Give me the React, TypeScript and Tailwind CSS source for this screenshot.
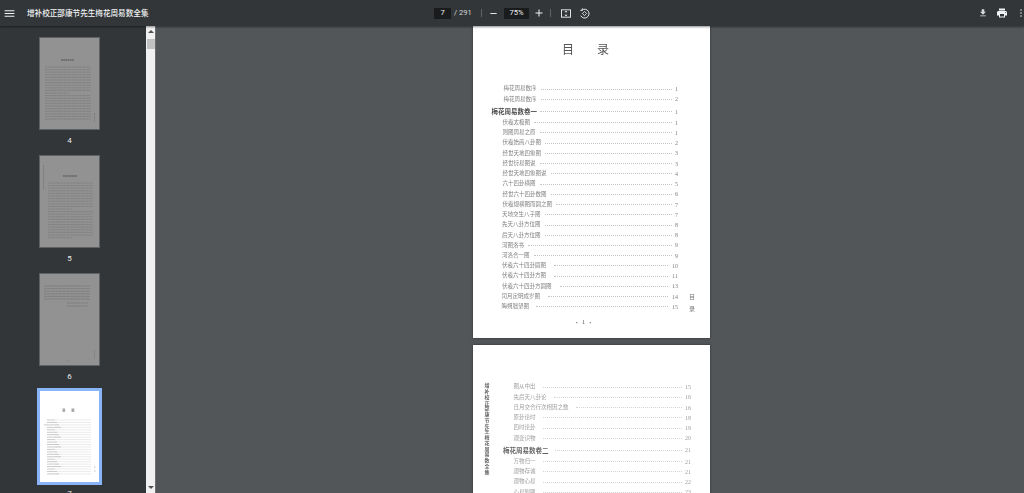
const cjk = "font-['Noto_Sans_CJK_SC','Noto_Sans',sans-serif]";

function Icon({ d, className }: { d: string; className: string }) {
  return (
    <svg viewBox="0 0 24 24" fill="currentColor" className={className}>
      <path d={d} />
    </svg>
  );
}

const MENU = "M3 18h18v-2H3v2zm0-5h18v-2H3v2zm0-7v2h18V6H3z";
const MINUS = "M19 13H5v-2h14v2z";
const PLUS = "M19 13h-6v6h-2v-6H5v-2h6V5h2v6h6v2z";
const DOWNLOAD = "M19 9h-4V3H9v6H5l7 7 7-7zM5 18v2h14v-2H5z";
const PRINT = "M19 8H5c-1.66 0-3 1.34-3 3v6h4v4h12v-4h4v-6c0-1.66-1.34-3-3-3zm-3 11H8v-5h8v5zm3-7c-.55 0-1-.45-1-1s.45-1 1-1 1 .45 1 1-.45 1-1 1zm-1-9H6v4h12V3z";
const MORE = "M12 8c1.1 0 2-.9 2-2s-.9-2-2-2-2 .9-2 2 .9 2 2 2zm0 2c-1.1 0-2 .9-2 2s.9 2 2 2 2-.9 2-2-.9-2-2-2zm0 6c-1.1 0-2 .9-2 2s.9 2 2 2 2-.9 2-2-.9-2-2-2z";

function Toolbar() {
  return (
    <div className="relative z-10 grid h-[26px] shrink-0 grid-cols-[1fr_auto_1fr] items-center bg-[#323639] text-[#f1f3f4] shadow-[0_1px_2px_rgba(0,0,0,0.45)]">
      <div className="flex items-center">
        <Icon d={MENU} className="ml-[3px] h-[13px] w-[13px]" />
        <span className={`ml-[11px] whitespace-nowrap text-[7.6px] font-medium ${cjk}`}>增补校正邵康节先生梅花周易数全集</span>
      </div>
      <div className="flex items-center font-['Roboto',sans-serif] text-[7.5px]">
        <div className="flex h-[11px] w-[17px] items-center justify-center bg-[#191b1c]">7</div>
        <span className="ml-[3px] w-[16px] whitespace-nowrap text-[#d5d7d8]">/ 291</span>
        <div className="ml-[11px] h-[8px] w-px bg-[#5f6368]" />
        <Icon d={MINUS} className="ml-[6px] h-[11px] w-[11px]" />
        <div className="ml-[5px] flex h-[11px] w-[25px] items-center justify-center bg-[#191b1c]">75%</div>
        <Icon d={PLUS} className="ml-[4px] h-[12px] w-[12px]" />
        <div className="ml-[5px] h-[8px] w-px bg-[#5f6368]" />
        <svg viewBox="0 0 12 10" fill="none" stroke="currentColor" className="ml-[10px] h-[9px] w-[10px]">
          <rect x="0.6" y="0.6" width="10.8" height="8.8" strokeWidth="1.1" />
          <path d="M6 2v2M6 6v2M4.8 3.4 6 2l1.2 1.4M4.8 6.6 6 8l1.2-1.4" strokeWidth="0.9" />
        </svg>
        <svg viewBox="0 0 12 12" fill="none" stroke="currentColor" className="ml-[8px] h-[11px] w-[11px]">
          <path d="M3.4 2.2A4.8 4.8 0 1 1 1.9 8.4" strokeWidth="1" />
          <path d="M3.6 0.4v2.2H1.4" strokeWidth="1" />
          <path d="M3.7 6 6 3.7 8.3 6 6 8.3z" strokeWidth="0.9" />
        </svg>
      </div>
      <div className="flex items-center justify-end">
        <Icon d={DOWNLOAD} className="mr-[1px] h-[10px] w-[10px] text-[#d8dadb]" />
        <Icon d={PRINT} className="ml-[7px] h-[12px] w-[12px]" />
        <Icon d={MORE} className="ml-[7px] mr-[-3px] h-[12px] w-[12px] text-[#8d8f91]" />
      </div>
    </div>
  );
}

function Lines({ x1, x2, top, rows, pitch, ink }: { x1: number; x2: number; top: number; rows: number; pitch: number; ink: string }) {
  return (
    <g stroke={ink} strokeWidth="0.8">
      {Array.from({ length: rows }, (_, i) => (
        <line key={i} x1={x1} x2={i % 11 === 10 ? x1 + 24 : x2} y1={top + i * pitch} y2={top + i * pitch} strokeDasharray="2 0.3 1.2 0.3" />
      ))}
    </g>
  );
}

function Thumb({ page, selected }: { page: number; selected?: boolean }) {
  return (
    <div className="flex h-[117.7px] shrink-0 flex-col items-center">
      <svg
        viewBox="0 0 59 91"
        className={
          selected
            ? "h-[91px] w-[59px] shrink-0 bg-white outline-[3.4px] outline-[#8ab4f8]"
            : "h-[91px] w-[59px] shrink-0 bg-[#929292] outline outline-1 outline-[#5f6264] blur-[0.3px]"
        }
      >
        {page === 4 && (
          <>
            <line x1="21" x2="34" y1="22" y2="22" stroke="#666" strokeWidth="1.3" strokeDasharray="1.8 0.4" />
            <Lines x1={5} x2={51} top={29} rows={21} pitch={2.6} ink="#7c7c7c" />
            <line x1="54.5" x2="54.5" y1="75" y2="84" stroke="#7a7a7a" strokeWidth="1" strokeDasharray="1 0.3" />
          </>
        )}
        {page === 5 && (
          <>
            <line x1="3.5" x2="3.5" y1="9" y2="33" stroke="#7a7a7a" strokeWidth="1" strokeDasharray="1 0.3" />
            <line x1="23" x2="37" y1="20" y2="20" stroke="#666" strokeWidth="1.3" strokeDasharray="1.8 0.4" />
            <Lines x1={8} x2={53} top={27} rows={22} pitch={2.6} ink="#7e7e7e" />
          </>
        )}
        {page === 6 && (
          <>
            <Lines x1={4} x2={50} top={12} rows={6} pitch={2.6} ink="#797979" />
            <line x1="27" x2="48" y1="29" y2="29" stroke="#797979" strokeWidth="0.8" strokeDasharray="2 0.3 1.2 0.3" />
            <line x1="27" x2="48" y1="32" y2="32" stroke="#797979" strokeWidth="0.8" strokeDasharray="2 0.3 1.2 0.3" />
            <line x1="54.5" x2="54.5" y1="76" y2="85" stroke="#808080" strokeWidth="1" strokeDasharray="1 0.3" />
            <line x1="26" x2="30" y1="87" y2="87" stroke="#848484" strokeWidth="0.6" />
          </>
        )}
        {page === 7 && (
          <>
            <rect x="22.5" y="17.5" width="2.6" height="3.4" fill="#a8a8a8" />
            <rect x="31.5" y="17.5" width="2.8" height="3.4" fill="#a8a8a8" />
            <g stroke="#e6e6e6" strokeWidth="0.8">
              {Array.from({ length: 23 }, (_, i) => (
                <line key={i} x1="15" x2="51" y1={29 + i * 2.45} y2={29 + i * 2.45} />
              ))}
            </g>
            <g stroke="#c4c4c4" strokeWidth="0.9">
              {Array.from({ length: 23 }, (_, i) => (
                <line key={i} x1={i === 2 ? 4 : 7} x2={15 + (i % 4) * 2} y1={29 + i * 2.45} y2={29 + i * 2.45} />
              ))}
            </g>
            <line x1="54" x2="55.5" y1="76" y2="76" stroke="#bbbbbb" strokeWidth="0.9" />
            <line x1="54" x2="55.5" y1="80" y2="80" stroke="#bbbbbb" strokeWidth="0.9" />
          </>
        )}
      </svg>
      <span className="mt-[7px] font-['Roboto',sans-serif] text-[8px] leading-[10px] text-[#e8eaed]">{page}</span>
    </div>
  );
}

function Sidebar() {
  return (
    <div className="flex w-[146px] shrink-0 flex-col items-center overflow-hidden bg-[#323639] pr-[7px] pt-[12.3px]">
      {[4, 5, 6, 7].map((p) => (
        <Thumb key={p} page={p} selected={p === 7} />
      ))}
    </div>
  );
}

function Scrollbar() {
  return (
    <div className="flex w-[10px] shrink-0 flex-col items-center justify-between border-r border-r-[#6a6d70] bg-[#f1f1f1] py-[4px]">
      <div className="relative flex w-full flex-col items-center">
        <div className="h-0 w-0 border-x-[3px] border-b-[3px] border-x-transparent border-b-[#505050]" />
        <div className="mt-[6px] h-[10px] w-[8px] bg-[#c1c1c1]" />
      </div>
      <div className="h-0 w-0 border-x-[3px] border-t-[3px] border-x-transparent border-t-[#505050]" />
    </div>
  );
}

type Entry = {
  text: string;
  num: string;
  indent: string; // left offset of the text
  gap: string; // space before the leader
  tail?: string; // number column
  strong?: boolean;
};

const tailEarly = "w-[10px] pl-[3px]";
const tailLate = "w-[14px] pl-[4px]";

const page1: Entry[] = [
  { text: "梅花周易数序", num: "1", indent: "pl-[30.5px]", gap: "ml-[4px]" },
  { text: "梅花周易数序", num: "2", indent: "pl-[30.5px]", gap: "ml-[4px]" },
  { text: "梅花周易数卷一", num: "1", indent: "pl-[18.5px]", gap: "ml-[3px]", strong: true },
  { text: "伏羲太极图", num: "1", indent: "pl-[29.5px]", gap: "ml-[4px]" },
  { text: "则图周易之原", num: "1", indent: "pl-[29.5px]", gap: "ml-[4px]" },
  { text: "伏羲始画八卦图", num: "2", indent: "pl-[29.5px]", gap: "ml-[4px]" },
  { text: "经世天地四象图", num: "3", indent: "pl-[29.5px]", gap: "ml-[4px]" },
  { text: "经世衍易图说", num: "3", indent: "pl-[29.5px]", gap: "ml-[4px]" },
  { text: "经世天地四象图说", num: "4", indent: "pl-[29.5px]", gap: "ml-[4px]" },
  { text: "六十四卦横图", num: "5", indent: "pl-[29.5px]", gap: "ml-[4px]" },
  { text: "经世六十四卦数图", num: "6", indent: "pl-[29.5px]", gap: "ml-[4px]" },
  { text: "伏羲规横图而圆之图", num: "7", indent: "pl-[29.5px]", gap: "ml-[4px]" },
  { text: "天地交生八子图", num: "7", indent: "pl-[29px]", gap: "ml-[4px]" },
  { text: "先天八卦方位图", num: "8", indent: "pl-[29px]", gap: "ml-[4px]" },
  { text: "后天八卦方位图", num: "8", indent: "pl-[29px]", gap: "ml-[4px]" },
  { text: "河图洛书", num: "9", indent: "pl-[29px]", gap: "ml-[4px]" },
  { text: "河洛合一图", num: "9", indent: "pl-[29px]", gap: "ml-[4px]" },
  { text: "伏羲六十四卦圆图", num: "10", indent: "pl-[29px]", gap: "ml-[8px]", tail: tailLate },
  { text: "伏羲六十四卦方图", num: "11", indent: "pl-[29px]", gap: "ml-[8px]", tail: tailLate },
  { text: "伏羲六十四卦方圆图", num: "13", indent: "pl-[29px]", gap: "ml-[8px]", tail: tailLate },
  { text: "闰月定明成岁图", num: "14", indent: "pl-[28.5px]", gap: "ml-[8px]", tail: tailLate },
  { text: "晦朔朏望图", num: "15", indent: "pl-[28.5px]", gap: "ml-[6.5px]", tail: tailLate },
];

const page2: Entry[] = [
  { text: "图从中出", num: "15", indent: "pl-[10.5px]", gap: "ml-[7px]" },
  { text: "先后天八卦论", num: "16", indent: "pl-[10.5px]", gap: "ml-[7px]" },
  { text: "日月交合行次相因之数", num: "16", indent: "pl-[10.5px]", gap: "ml-[7px]" },
  { text: "原卦论时", num: "18", indent: "pl-[10.5px]", gap: "ml-[7px]" },
  { text: "四时论卦", num: "19", indent: "pl-[10.5px]", gap: "ml-[7px]" },
  { text: "观变识物", num: "20", indent: "pl-[10.5px]", gap: "ml-[7px]" },
  { text: "梅花周易数卷二", num: "21", indent: "pl-0", gap: "ml-[6px]", strong: true },
  { text: "万物归一", num: "21", indent: "pl-[10.5px]", gap: "ml-[7px]" },
  { text: "观物存诚", num: "21", indent: "pl-[10.5px]", gap: "ml-[7px]" },
  { text: "观物心易", num: "22", indent: "pl-[10.5px]", gap: "ml-[7px]" },
  { text: "心易附图", num: "23", indent: "pl-[10.5px]", gap: "ml-[7px]" },
];

function TocRow({ entry, ink, strongInk, dots }: { entry: Entry; ink: string; strongInk: string; dots: string }) {
  return (
    <div className={`flex items-center whitespace-nowrap ${entry.indent} ${entry.strong ? "h-[13.1px] pt-[1px]" : "h-[10.24px]"}`}>
      {entry.strong ? (
        <span className={`text-[6.5px] font-bold leading-none ${strongInk}`}>{entry.text}</span>
      ) : (
        <span className={`text-[5.5px] leading-none ${ink}`}>{entry.text}</span>
      )}
      <div className={`h-0 flex-1 border-b border-dotted ${dots} ${entry.gap}`} />
      <span className={`font-['Liberation_Serif',serif] text-[6px] leading-none ${ink} ${entry.tail ?? tailEarly}`}>{entry.num}</span>
    </div>
  );
}

function Pages() {
  return (
    <div className={`flex flex-1 flex-col items-center overflow-hidden bg-[#525659] pl-[3px] ${cjk}`}>
      <div className="relative h-[312px] w-[237px] shrink-0 bg-white pr-[28px] pt-[15px] shadow-[0_0_2px_rgba(0,0,0,0.5)]">
        <div className="blur-[0.35px]">
          <div className="flex h-[16px] items-center justify-center gap-[23px] pl-[16px] text-[12px] text-[#555]">
            <span>目</span>
            <span>录</span>
          </div>
          <div className="mt-[27px]">
            {page1.map((e, i) => (
              <TocRow key={i} entry={e} ink="text-[#808080]" strongInk="text-[#4a4a4a]" dots="border-[#c4c4c4]" />
            ))}
          </div>
          <div className="mt-[5px] flex h-[10px] items-center justify-center gap-[2px] pl-[12px] text-[6px] text-[#666]">
            <span>•</span>
            <span className="font-['Liberation_Serif',serif] text-[7px]">1</span>
            <span>•</span>
          </div>
        </div>
        {/* running head at the fore edge */}
        <div className="absolute right-[15px] top-[268px] flex flex-col gap-[6px] text-[6px] leading-[6px] text-[#777] blur-[0.35px]">
          <span>目</span>
          <span>录</span>
        </div>
      </div>
      <div className="mt-[7px] flex h-[312px] w-[237px] shrink-0 bg-white pr-[18px] pt-[37px] shadow-[0_0_2px_rgba(0,0,0,0.5)] blur-[0.35px]">
        <div className="w-[30px] shrink-0 pl-[10.5px] pt-[1px]">
          <span className="text-[5px] font-bold leading-[6px] tracking-[0.75px] text-[#666] [writing-mode:vertical-rl]">增补校正邵康节先生梅花周易数全集</span>
        </div>
        <div className="flex-1">
          {page2.map((e, i) => (
            <TocRow key={i} entry={e} ink="text-[#a0a0a0]" strongInk="text-[#666]" dots="border-[#d4d4d4]" />
          ))}
        </div>
      </div>
    </div>
  );
}

export default function App() {
  return (
    <div className="flex h-[493px] w-[1024px] flex-col overflow-hidden bg-[#525659]">
      <Toolbar />
      <div className="flex min-h-0 flex-1">
        <Sidebar />
        <Scrollbar />
        <Pages />
      </div>
    </div>
  );
}
